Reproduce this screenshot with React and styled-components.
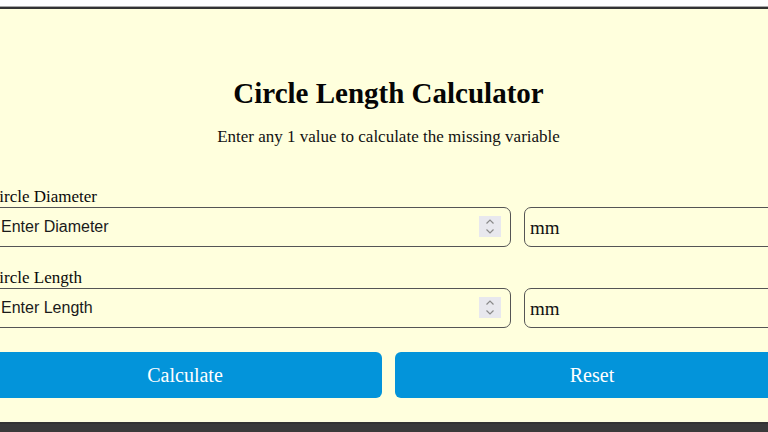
import React from "react";
import styled, { createGlobalStyle } from "styled-components";

const GlobalStyle = createGlobalStyle`
  html, body {
    margin: 0;
    padding: 0;
    background: #ffffff;
    overflow: hidden;
  }
  * { box-sizing: border-box; }
`;

const Page = styled.div`
  width: 768px;
  height: 432px;
  overflow: hidden;
  padding-top: 7px;
`;

const Card = styled.div`
  width: 805px;
  margin-left: -14px;
  background: #ffffdd;
  border: 2px solid #333333;
  border-radius: 3px;
  box-shadow: 0 -1px 0 #a8a8a8, 0 10px 0 #3a3a3a;
  padding: 68px 0 24px;
  font-family: "Liberation Serif", "Times New Roman", serif;
  color: #000;
`;

const Title = styled.h1`
  margin: 0;
  font-size: 29px;
  line-height: 33px;
  font-weight: bold;
  text-align: center;
  color: #050505;
`;

const Subtitle = styled.p`
  margin: 17px 0 0;
  font-size: 17px;
  line-height: 20px;
  text-align: center;
  color: #111;
`;

const Field = styled.div`
  margin-top: ${(p) => p.$gap}px;
`;

const Label = styled.label`
  display: block;
  font-size: 17px;
  line-height: 19px;
  margin-bottom: 1px;
  color: #0a0a0a;
`;

const Row = styled.div`
  display: grid;
  grid-template-columns: 523px 1fr;
  gap: 13px;
`;

const InputWrap = styled.div`
  position: relative;
`;

const NumberInput = styled.input`
  width: 100%;
  height: 40px;
  border: 1px solid #555;
  border-radius: 7px;
  background: transparent;
  padding: 0 40px 0 12px;
  font-family: "Liberation Sans", Arial, sans-serif;
  font-size: 16px;
  color: #111;
  outline: none;
  &::placeholder { color: #1a1a1a; opacity: 1; }
`;

const Spinner = styled.div`
  position: absolute;
  right: 10px;
  top: 9px;
  width: 22px;
  height: 21px;
  background: #e8e8ee;
  display: flex;
  align-items: center;
  justify-content: center;
`;

const Unit = styled.select`
  width: 100%;
  height: 40px;
  border: 1px solid #555;
  border-radius: 7px;
  background: transparent;
  padding: 0 5px;
  font-family: "Liberation Serif", "Times New Roman", serif;
  font-size: 19px;
  color: #111;
  appearance: none;
  outline: none;
`;

const Buttons = styled.div`
  margin-top: 24px;
  display: grid;
  grid-template-columns: 1fr 1fr;
  gap: 13px;
`;

const Button = styled.button`
  height: 46px;
  border: none;
  border-radius: 6px;
  background: #0394da;
  color: #fff;
  font-family: "Liberation Serif", "Times New Roman", serif;
  font-size: 20px;
  cursor: pointer;
`;

const SpinIcon = () => (
  <svg width="12" height="17" viewBox="0 0 12 17" fill="none" stroke="#8a8a8a" strokeWidth="1.2">
    <path d="M2.5 5.5 L6 2 L9.5 5.5" />
    <path d="M2.5 11.5 L6 15 L9.5 11.5" />
  </svg>
);

const CalcField = ({ label, placeholder, gap }) => (
  <Field $gap={gap}>
    <Label>{label}</Label>
    <Row>
      <InputWrap>
        <NumberInput type="text" placeholder={placeholder} />
        <Spinner>
          <SpinIcon />
        </Spinner>
      </InputWrap>
      <Unit defaultValue="mm">
        <option value="mm">mm</option>
        <option value="cm">cm</option>
        <option value="m">m</option>
        <option value="in">in</option>
      </Unit>
    </Row>
  </Field>
);

export default function App() {
  return (
    <>
      <GlobalStyle />
      <Page>
        <Card>
          <Title>Circle Length Calculator</Title>
          <Subtitle>Enter any 1 value to calculate the missing variable</Subtitle>
          <CalcField label="Circle Diameter" placeholder="Enter Diameter" gap={40} />
          <CalcField label="Circle Length" placeholder="Enter Length" gap={21} />
          <Buttons>
            <Button>Calculate</Button>
            <Button>Reset</Button>
          </Buttons>
        </Card>
      </Page>
    </>
  );
}
